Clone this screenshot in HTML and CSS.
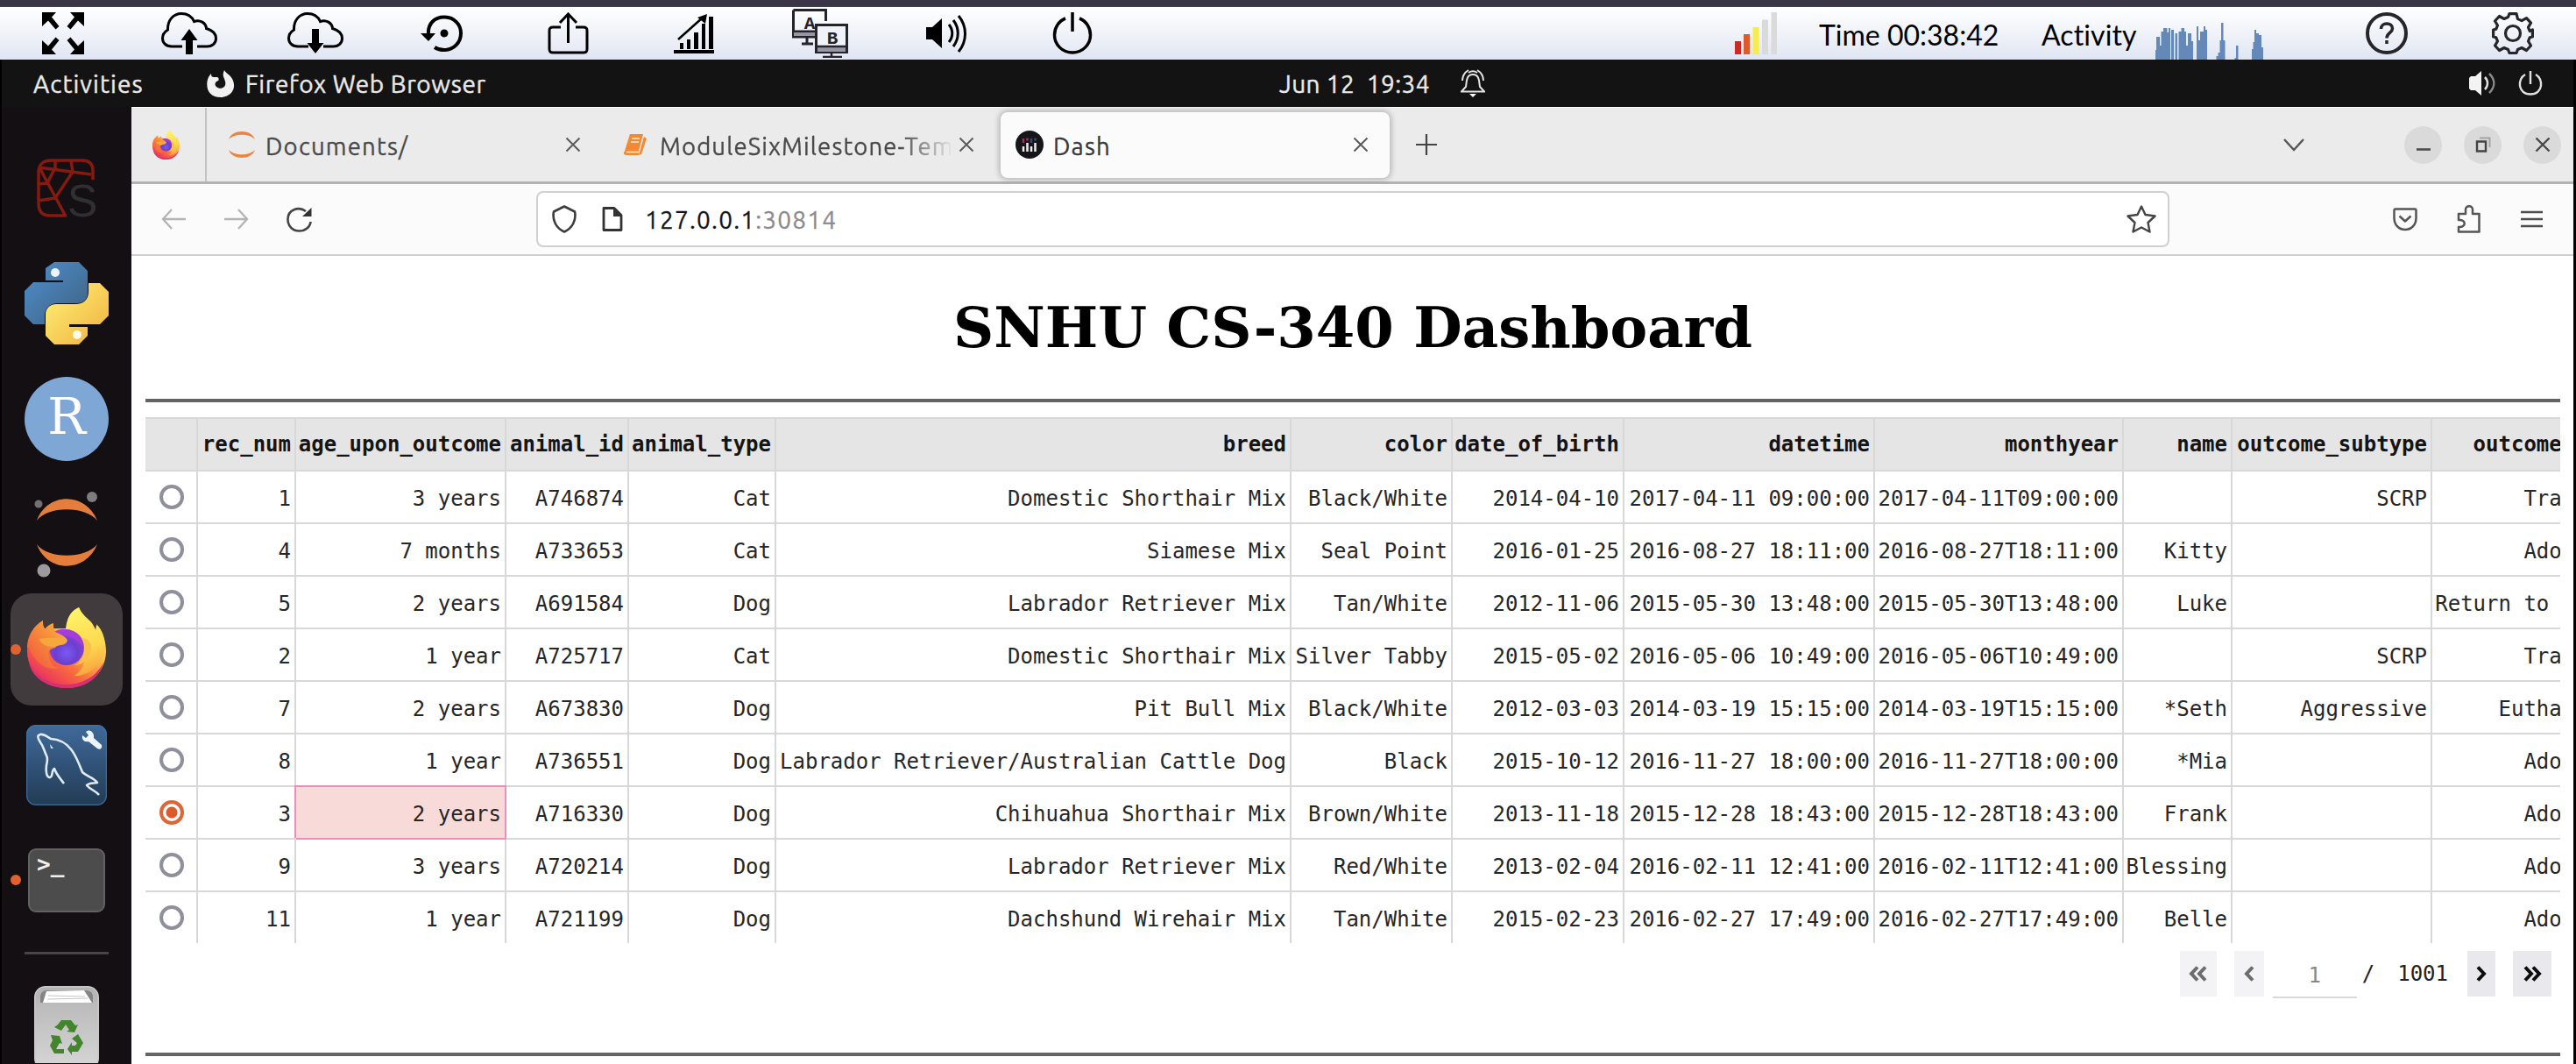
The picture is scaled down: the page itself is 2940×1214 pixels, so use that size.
FILE: index.html
```html
<!DOCTYPE html>
<html lang="en">
<head>
<meta charset="utf-8">
<title>Dash</title>
<link rel="stylesheet" href="styles.css">
</head>
<body>
<svg class="defs" width="0" height="0" aria-hidden="true">
  <defs>
    <linearGradient id="ffBody" x1="0.85" y1="0.1" x2="0.2" y2="0.95">
      <stop offset="0" stop-color="#fff36a"/><stop offset="0.35" stop-color="#ffbd4a"/><stop offset="0.65" stop-color="#f9703d"/><stop offset="0.9" stop-color="#ee3f57"/><stop offset="1" stop-color="#d92a78"/>
    </linearGradient>
    <linearGradient id="ffHead" x1="0" y1="1" x2="1" y2="0">
      <stop offset="0" stop-color="#f2503f"/><stop offset="0.6" stop-color="#f6903a"/><stop offset="1" stop-color="#fcbd45"/>
    </linearGradient>
    <linearGradient id="ffFlame" x1="0.4" y1="0" x2="0.6" y2="1">
      <stop offset="0" stop-color="#fff36a"/><stop offset="0.6" stop-color="#fcd84f"/><stop offset="1" stop-color="#f9a03d"/>
    </linearGradient>
    <radialGradient id="ffGlobe" cx="0.5" cy="0.65" r="0.65">
      <stop offset="0" stop-color="#7a5af0"/><stop offset="0.5" stop-color="#6a3fd0"/><stop offset="1" stop-color="#a83fd8"/>
    </radialGradient>
    <linearGradient id="pyBlue" x1="0" y1="0" x2="1" y2="1"><stop offset="0" stop-color="#5090cc"/><stop offset="1" stop-color="#3d6082"/></linearGradient>
    <linearGradient id="pyGold" x1="0" y1="0" x2="1" y2="1"><stop offset="0.1" stop-color="#fdec74"/><stop offset="1" stop-color="#f0b03c"/></linearGradient>
    <linearGradient id="sqlBg" x1="0" y1="0" x2="0" y2="1"><stop offset="0" stop-color="#406a9b"/><stop offset="1" stop-color="#223b53"/></linearGradient>
    <linearGradient id="binBg" x1="0" y1="0" x2="0" y2="1"><stop offset="0" stop-color="#b4b4b4"/><stop offset="1" stop-color="#d6d6d6"/></linearGradient>
    <symbol id="firefox" viewBox="0 0 90 92">
      <path d="M79 20c8 9 11 20 11 30 0 24-20 42-45 42S0 74 0 50c0-14 6-27 18-35 0 4 0 6 2 9h27C43 14 50 4 59 0c4 9 10 12 15 18 2 3 3 6 4 9z" fill="url(#ffBody)"/>
      <path d="M44 32C43 14 50 4 59 0c3 11 14 14 20 27 2-2 1-5 0-8 9 9 11 21 9 32-4 18-22 28-34 27 12-8 15-22 8-35-4-7-10-10-18-11z" fill="url(#ffFlame)"/>
      <circle cx="45" cy="46" r="20" fill="url(#ffGlobe)"/>
      <path d="M28 30c9-8 26-7 34 5l-5-1c4 2 6 6 6 10-8-10-21-14-35-14z" fill="#a43ddb"/>
      <path d="M62 35c7 8 3 27-8 31 12 0 21-12 19-23-2-6-7-8-11-8z" fill="#fbc04a"/>
      <path d="M0 46c0-13 7-25 18-31-1 4 0 7 2 10 3-4 6-6 10-7 0 5 0 9 4 11 5 2 11 5 12 9-3 6-10 3-14 8-3 1-6 1-8 6 3 18 10 16 12 17-16 4-28-8-34-23z" fill="url(#ffHead)"/>
      <path d="M13 36c10-1 22-3 33 2-3 7-11 4-15 7-5 0-12 0-18-9z" fill="#f7a83c"/>
      <path d="M2 64c9 18 27 24 42 24 19 0 35-9 43-25-5 19-22 29-42 29S7 82 2 64z" fill="#d82f71"/>
    </symbol>
    <symbol id="close" viewBox="0 0 18 18"><path d="M1.500 1.500l15 15M16.500 1.500l-15 15" fill="none" stroke="#5b5b5b" stroke-width="2"/></symbol>
    <symbol id="cloud" viewBox="0 0 64 48"><path d="M24 39H12C5 39 1.500 34.500 1.500 29.500c0-4.500 3-7.500 6-9.500C7 9 14 1.500 23 1.500c7 0 12 3.500 14.500 9C44 8 51 12 51.500 18.500c7 2 11 6 11 11.500 0 6-5 9-10 9H41" fill="none" stroke="#000" stroke-width="3"/></symbol>
  </defs>
</svg>

<div class="frame-edge"></div>

<header class="toolbar">
  <nav class="tools">
    <span class="slot"><svg width="48" height="48" viewBox="0 0 48 48"><path d="M0 0h16l-5 5.500 8.500 10.500-4 3.500L7 9.500 0 16zM48 0H32l5 5.500L28.500 16l4 3.500L41 9.500l7 6.500zM0 48h16l-5-5.500L19.500 32l-4-3.500L7 38.500 0 32zM48 48H32l5-5.500L28.500 32l4-3.500 8.500 10 7-6.500z"/></svg></span>
    <span class="slot"><svg width="64" height="48"><use href="#cloud"/><path d="M32 19l9.500 13H36v16h-8V32h-5.500z"/></svg></span>
    <span class="slot"><svg width="64" height="48"><use href="#cloud"/><path d="M32 47l-9.500-12H28V19h8v16h5.500z"/></svg></span>
    <span class="slot"><svg width="48" height="48" viewBox="0 0 48 48"><path d="M9 25C8 13 16 5.500 27 5.500c11 0 19 8 19 18.500s-8 19-19 19c-4 0-8-1-11-3" fill="none" stroke="#000" stroke-width="4"/><path d="M0 24h17l-8 9z"/><circle cx="27" cy="24" r="4.500"/></svg></span>
    <span class="slot"><svg width="48" height="48" viewBox="0 0 48 48" fill="none" stroke="#000" stroke-width="3"><path d="M16 17H7c-3 0-4 1-4 4v21c0 3 1 4 4 4h35c3 0 4-1 4-4V21c0-3-1-4-4-4h-9M24.500 35V2M15 12l9.500-10L34 12"/></svg></span>
    <span class="slot"><svg width="48" height="48" viewBox="0 0 48 48"><path d="M1 43h46v4H1zM8 35h4v7H8zM16 31h4v11h-4zM24 23h5v19h-5zM33 13h4v29h-4zM41 5h5v37h-5z"/><path d="M6 31L34 6" stroke="#000" stroke-width="2.500"/><path d="M28 6l11-4-2 11z"/></svg></span>
    <span class="slot"><svg width="64" height="56" viewBox="0 0 64 56"><path d="M1.500 1.500h37V14M1.500 1.500V32H26M1 26h25M17 32v8M11 40h13" fill="none" stroke="#24242a" stroke-width="3"/><rect x="2" y="27" width="24" height="4" fill="#9696a4"/><rect x="27.500" y="18.500" width="35" height="31" fill="#f1f3fa" stroke="#24242a" stroke-width="3"/><rect x="29" y="44" width="32" height="5" fill="#9696a4"/><path d="M28 43h34M45 50v5M35 55h22" stroke="#24242a" stroke-width="2.500"/><text x="20" y="23" class="glyph">A</text><text x="46" y="40" class="glyph">B</text></svg></span>
    <span class="slot"><svg width="48" height="48" viewBox="0 0 48 48"><path d="M1 17h7l11-10v34L8 31H1z"/><path d="M27 14c5 6 5 14 0 20M32 9c7 9 7 21 0 30M38 4c10 12 10 29 0 41" fill="none" stroke="#000" stroke-width="3"/></svg></span>
    <span class="slot"><svg width="48" height="48" viewBox="0 0 48 48" fill="none" stroke="#000" stroke-width="3.500"><path d="M24 0v22M16 7C8 10 3.500 18 3.500 26c0 11 9 20 20.500 20s20.500-9 20.500-20C44.500 18 40 10 32 7"/></svg></span>
  </nav>
  <div class="session">
    <svg class="signal" width="48" height="48"><path fill="#cb2a25" d="M0 33h7v15H0z"/><path fill="#dc5a2c" d="M10 25h7v23h-7z"/><path fill="#f8ec4a" d="M20.500 17h7v31h-7z"/><path fill="#dadada" d="M31 8.500h7V48h-7zM41.500 0h7v48h-7z"/></svg>
    <span class="time">Time 00:38:42</span>
    <span class="activity">Activity</span>
    <svg class="spark" width="124" height="42" viewBox="0 0 124 42" fill="#6488b8"><path d="M0 42V31h1V16h4v10h1.500V10H9V6h4.500v5h1.500V6h2v36zM18 42V8h3v34zM22.500 42V12h2.500v30zM26.500 42V10h3V6H33v4h2v16h2V12h4v9h2v21zM47 42V4h2v16h2V10h4V4h2v4h2v34zM69.500 42v-4h2v-4h2V20h1.500V0h2.500v20h2v22zM90.500 42v-2H92V26h2.500v16zM110 42V30h1.500V22h1.500V8h2v4h3v2h3v14h2v14z"/></svg>
  </div>
  <div class="tools">
    <span class="slot"><svg width="48" height="48" viewBox="0 0 48 48" fill="none" stroke="#26262a"><circle cx="24" cy="24" r="22" stroke-width="4"/><path d="M17.500 19c0-4 3-6 6.500-6s6.500 2 6.500 5.500c0 5-6.500 5-6.500 11" stroke-width="3.500"/><path d="M24 32v4" stroke-width="3.500"/></svg></span>
    <span class="slot"><svg width="48" height="48" viewBox="0 0 48 48" fill="none" stroke="#26262a" stroke-width="3.200" stroke-linejoin="round"><path d="M20 1.600h8l1.500 6 4.500 2 5.500-3 5 5.500-3 5 1.700 4.400L46.400 20v8l-3.200.8-1.700 4.200 3 5-5 5.500-5.500-3-4.500 2-1.500 4h-8l-1.500-4-4.500-2-5.500 3-5-5.500 3-5L4.800 28.800 1.600 28v-8l3.200-.8 1.700-4.200-3-5 5-5.500 5.500 3 4.500-2z"/><circle cx="24" cy="24" r="8.500"/></svg></span>
  </div>
</header>

<section class="desktop">
  <div class="gnome-bar">
    <span class="g-activities">Activities</span>
    <svg class="g-ff" width="31" height="31" viewBox="0 0 31 31"><path d="M20 0c2 4 8 6 10 12 4 11-4 19-14.500 19S-1 24 .500 13C1 9 3 6 5 4c0 3 1 4 3 4h4c2 1 2 3 1 4-3 1-5 4-2 7 4 4 12 1 10-6-1-5-4-6-1-13z" fill="#f1f1f1"/></svg>
    <span class="g-app">Firefox Web Browser</span>
    <span class="g-clock">Jun 12&nbsp; 19:34</span>
    <svg class="g-bell" width="28" height="32" viewBox="0 0 28 32" fill="none" stroke="#e4e4e4" stroke-width="2"><path d="M1 25.500h26L22 20c-1-5 0-14-8-14s-7 9-8 14zM2 13C2 8 4 4 9 1M26 13c0-5-2-9-7-12M9 4c3-2 7-2 10 0"/><path d="M10 28h8l-4 4z" fill="#fff" stroke="none"/></svg>
    <span class="g-status">
      <svg width="30" height="28" viewBox="0 0 30 28"><path d="M0 8l2-2h5l7-6v28l-7-6H2l-2-2z" fill="#f3f3f3"/><path d="M18 7c4 4 4 10 0 14" fill="none" stroke="#e0e0e0" stroke-width="2.500"/><path d="M23 3c7 7 7 15 0 22" fill="none" stroke="#8a8a8a" stroke-width="2.500"/></svg>
      <svg width="28" height="28" viewBox="0 0 28 28" fill="none" stroke="#e0e0e0" stroke-width="2.400"><path d="M14 0v15M8 4C-1 9-1 26 14 26.500 29 26 29 9 20 4"/></svg>
    </span>
  </div>

  <div class="workspace">
    <aside class="dock">
      <svg class="d-spyder" width="68" height="68" viewBox="0 0 68 68" fill="none"><path d="M64 24V14C64 6 60 2 52 2H16C7 2 2 7 2 16v35c0 9 4 14 13 14h19M2 10l60 8M4 12l28 52M21 2v8L12 28l-10 1M39 2l2 13L21 45 2 48" stroke="#851a10" stroke-width="3.500"/><text x="52" y="66" class="spy-s">S</text></svg>
      <svg class="d-python" width="96" height="96" viewBox="0 0 96 96"><path d="M34 1h28l10 10v25c0 8-5 12-12 12H38c-9 0-15 6-15 14v10H10L0 62V34l10-10h34v-2H24V8z" fill="url(#pyBlue)"/><path d="M62 95H34L24 85V61c0-8 6-12 12-12h22c10 0 15-6 15-14V25h13l10 10v27L86 72H51v3h21v10z" fill="url(#pyGold)"/><circle cx="35" cy="13" r="5" fill="#eef4ff"/><circle cx="60" cy="84" r="5" fill="#fffbe8"/></svg>
      <div class="d-r">R</div>
      <svg class="d-jupyter" width="76" height="98" viewBox="0 0 76 98"><path d="M4 33C16 0 60 0 73 33 60 16 16 16 4 33zM4 60c12 17 56 17 69 0C60 93 16 93 4 60z" fill="#e57e3c"/><circle cx="6" cy="14" r="4.500" fill="#717171"/><circle cx="67" cy="6" r="6" fill="#7d7d7d"/><circle cx="12" cy="90" r="7.500" fill="#9b9b9b"/></svg>
      <div class="d-firefox running"><svg width="90" height="92"><use href="#firefox"/></svg></div>
      <svg class="d-mysql" width="92" height="92" viewBox="0 0 92 92"><rect width="92" height="92" rx="11" fill="url(#sqlBg)"/><rect x=".7" y=".7" width="90.600" height="90.600" rx="10.500" fill="none" stroke="#3f74ae" stroke-width="1.400" opacity=".7"/><path d="M43 67c-6-8-9-11-11-17-4 3-1 9-5 10-4 0-5-7-4-14 1-4 2-7 0-11-3-6-3-10-7-15-3-5-4-8 0-9 4-1 8 3 12 5 22 1 29 20 36 38 5 5 13 6 17 12-5 1-9 0-12 3 4 5 10 6 14 11" fill="none" stroke="#dfeaf4" stroke-width="2.600" stroke-linejoin="round"/><path d="M27 22l4 5-3 0z" fill="#dfeaf4"/><path d="M68 8c4-4 10 0 9 7l9 8c1 4-2 6-5 4l-10-8c-5 1-8-2-7-7l4 3 3-3z" fill="#edf4fa"/></svg>
      <div class="d-term running"><span>&gt;_</span></div>
      <div class="d-sep"></div>
      <svg class="d-trash" width="74" height="88" viewBox="0 0 74 88"><rect x=".8" y=".8" width="72.400" height="94" rx="12" fill="url(#binBg)" stroke="#c9c9c9" stroke-width="1.600"/><path d="M7 19V12c0-4 3-7 7-7h45c5 0 8 3 8 7v7z" fill="#858585"/><path d="M10 19l4-13 43-1 9 14z" fill="#fff"/><path d="M16 11l42 1M15 15l46-1" stroke="#c6c6c6"/><g fill="#42852c"><path d="M27 44l4-5h11l5 6 3-1-4 9-9-1 3-2-4-6-5 7-8-4zM19 56l10 1 3 9-3-1-4 7h9v5H23l-5-9 3-6zM43 60l7-5 6 10-6 10h-7v4l-5-7 5-8v4h4l2-3z"/></g></svg>
    </aside>

    <main class="browser">
      <div class="tab-strip">
        <div class="pinned"><svg width="31" height="33" viewBox="0 0 90 92" preserveAspectRatio="none"><use href="#firefox" width="90" height="92"/></svg></div>
        <div class="tab t-doc">
          <svg width="32" height="32" viewBox="0 0 32 32"><path d="M1 10C5-2 27-2 31 10 24 3 8 3 1 10zM1 22c4 12 26 12 30 0-7 7-23 7-30 0z" fill="#ea8441"/></svg>
          <span class="label">Documents/</span><svg class="x" width="18" height="18"><use href="#close"/></svg>
        </div>
        <div class="tab t-mod">
          <svg width="28" height="26" viewBox="0 0 28 26"><path d="M8 1h15l-5 19H2zM3 20h15v5H4c-4 0-4-4-1-5zM24 4l3 2-6 18-3 1z" fill="#f08a35"/><path d="M10 6h9M9 10h9M4 21.500h14" stroke="#fff0dd" stroke-width="1.600"/></svg>
          <span class="label fade">ModuleSixMilestone-Tem</span><svg class="x" width="18" height="18"><use href="#close"/></svg>
        </div>
        <div class="tab t-dash">
          <svg width="32" height="32" viewBox="0 0 32 32"><circle cx="16" cy="16" r="16" fill="#15151a"/><path d="M9 18v6M13.500 14v10M18 18v6M22.500 14v10" stroke="#eee" stroke-width="2.500"/><path d="M9 9v5M13.500 8.500v3" stroke="#a13358" stroke-width="2.500"/><path d="M18 9v5M22.500 8.500v3" stroke="#3a4a68" stroke-width="2.500"/></svg>
          <span class="label">Dash</span><svg class="x" width="18" height="18"><use href="#close"/></svg>
        </div>
        <svg class="plus" width="24" height="24"><path d="M0 12h24M12 0v24" stroke="#444" stroke-width="2.200"/></svg>
        <svg class="chev" width="24" height="15" fill="none"><path d="M1 1l11 12L23 1" stroke="#555" stroke-width="2.400"/></svg>
        <span class="win"><svg width="16" height="18"><path d="M0 14.500h16" stroke="#4c4c4c" stroke-width="2.600"/></svg></span>
        <span class="win"><svg width="18" height="18" fill="none"><path d="M2 5.500h10v11H2z" stroke="#444" stroke-width="2.400"/><path d="M5 1.500h11.500V12" stroke="#a4a4a4" stroke-width="2"/></svg></span>
        <span class="win"><svg width="18" height="18"><path d="M1.500 1.500l15 15M16.500 1.500l-15 15" stroke="#484848" stroke-width="2.400"/></svg></span>
      </div>

      <div class="nav-bar">
        <svg class="n-back" width="28" height="24" fill="none" stroke="#b4b4b4" stroke-width="2.300"><path d="M28 12H2M12 1L2 12l10 11"/></svg>
        <svg class="n-fwd" width="28" height="24" fill="none" stroke="#b4b4b4" stroke-width="2.300"><path d="M0 12h26M16 1l10 11-10 11"/></svg>
        <svg class="n-reload" width="30" height="29" viewBox="0 0 30 29"><path d="M22 5C14-1 1 3 1.500 15c.5 8 6 12.500 13 12.500S27 23 27.500 17" fill="none" stroke="#444" stroke-width="2.600"/><path d="M28.500 1v10H18z" fill="#333"/></svg>
        <div class="url-box">
          <svg class="u-shield" width="30" height="32" fill="none" stroke="#3c3c3c" stroke-width="2.600" stroke-linejoin="round"><path d="M15 1.500l12 6c2 10-3 19-12 23C6 26.500 1 17.500 3 7.500z"/></svg>
          <svg class="u-doc" width="24" height="28"><path d="M2 1.500h12l8 8v17H2z" fill="none" stroke="#333" stroke-width="2.800" stroke-linejoin="round"/><path d="M13 1l9 10h-9z" fill="#333"/></svg>
          <span class="u-text"><b>127.0.0.1</b><i>:30814</i></span>
          <svg class="u-star" width="34" height="32" viewBox="0 0 34 32" fill="none" stroke="#444" stroke-width="2.400" stroke-linejoin="round"><path d="M17 1.500l4.500 9.500 11 1.500-8 7.500 2 10.500L17 25.500 7.500 30.500l2-10.500-8-7.500 11-1.500z"/></svg>
        </div>
        <svg class="n-pocket" width="28" height="27" fill="none" stroke="#555" stroke-width="2.500" stroke-linejoin="round"><path d="M3 1.500h22c1.500 0 1.500 1 1.500 2V12c0 8-6 13-12.500 13S1.500 20 1.500 12V3.500c0-1 0-2 1.500-2zM7.500 9.500l6.500 6 6.500-6"/></svg>
        <svg class="n-ext" width="28" height="32" fill="none" stroke="#555" stroke-width="2.500" stroke-linejoin="round"><path d="M2 12V10h8V5c0-5 8-5 8 0v5h7.500v20.500H2V25c9 1 9-9 0-8z"/></svg>
        <svg class="n-menu" width="25" height="20" stroke="#4d4d4d" stroke-width="2.600"><path d="M0 2h25M0 10h25M0 18h25"/></svg>
      </div>

      <div class="page">
        <h1>SNHU CS-340 Dashboard</h1>
        <hr>
        <div class="table-wrap">
          <table>
            <colgroup><col class="c0"><col class="c1"><col class="c2"><col class="c3"><col class="c4"><col class="c5"><col class="c6"><col class="c7"><col class="c8"><col class="c9"><col class="c10"><col class="c11"><col class="c12"></colgroup>
            <thead><tr><th></th><th>rec_num</th><th>age_upon_outcome</th><th>animal_id</th><th>animal_type</th><th>breed</th><th>color</th><th>date_of_birth</th><th>datetime</th><th>monthyear</th><th>name</th><th>outcome_subtype</th><th>outcome_type</th></tr></thead>
            <tbody>
              <tr><td><span class="radio"></span></td><td>1</td><td>3 years</td><td>A746874</td><td>Cat</td><td>Domestic Shorthair Mix</td><td>Black/White</td><td>2014-04-10</td><td>2017-04-11 09:00:00</td><td>2017-04-11T09:00:00</td><td></td><td>SCRP</td><td>Transfer</td></tr>
              <tr><td><span class="radio"></span></td><td>4</td><td>7 months</td><td>A733653</td><td>Cat</td><td>Siamese Mix</td><td>Seal Point</td><td>2016-01-25</td><td>2016-08-27 18:11:00</td><td>2016-08-27T18:11:00</td><td>Kitty</td><td></td><td>Adoption</td></tr>
              <tr><td><span class="radio"></span></td><td>5</td><td>2 years</td><td>A691584</td><td>Dog</td><td>Labrador Retriever Mix</td><td>Tan/White</td><td>2012-11-06</td><td>2015-05-30 13:48:00</td><td>2015-05-30T13:48:00</td><td>Luke</td><td></td><td>Return to Owner</td></tr>
              <tr><td><span class="radio"></span></td><td>2</td><td>1 year</td><td>A725717</td><td>Cat</td><td>Domestic Shorthair Mix</td><td>Silver Tabby</td><td>2015-05-02</td><td>2016-05-06 10:49:00</td><td>2016-05-06T10:49:00</td><td></td><td>SCRP</td><td>Transfer</td></tr>
              <tr><td><span class="radio"></span></td><td>7</td><td>2 years</td><td>A673830</td><td>Dog</td><td>Pit Bull Mix</td><td>Black/White</td><td>2012-03-03</td><td>2014-03-19 15:15:00</td><td>2014-03-19T15:15:00</td><td>*Seth</td><td>Aggressive</td><td>Euthanasia</td></tr>
              <tr><td><span class="radio"></span></td><td>8</td><td>1 year</td><td>A736551</td><td>Dog</td><td>Labrador Retriever/Australian Cattle Dog</td><td>Black</td><td>2015-10-12</td><td>2016-11-27 18:00:00</td><td>2016-11-27T18:00:00</td><td>*Mia</td><td></td><td>Adoption</td></tr>
              <tr><td><span class="radio on"></span></td><td>3</td><td class="active">2 years</td><td>A716330</td><td>Dog</td><td>Chihuahua Shorthair Mix</td><td>Brown/White</td><td>2013-11-18</td><td>2015-12-28 18:43:00</td><td>2015-12-28T18:43:00</td><td>Frank</td><td></td><td>Adoption</td></tr>
              <tr><td><span class="radio"></span></td><td>9</td><td>3 years</td><td>A720214</td><td>Dog</td><td>Labrador Retriever Mix</td><td>Red/White</td><td>2013-02-04</td><td>2016-02-11 12:41:00</td><td>2016-02-11T12:41:00</td><td>Blessing</td><td></td><td>Adoption</td></tr>
              <tr><td><span class="radio"></span></td><td>11</td><td>1 year</td><td>A721199</td><td>Dog</td><td>Dachshund Wirehair Mix</td><td>Tan/White</td><td>2015-02-23</td><td>2016-02-27 17:49:00</td><td>2016-02-27T17:49:00</td><td>Belle</td><td></td><td>Adoption</td></tr>
            </tbody>
          </table>
        </div>
        <div class="pager">
          <span class="pbtn off first"><svg width="21" height="18" fill="none"><path d="M10 1.500L3 9l7 7.500M19 1.500L12 9l7 7.500"/></svg></span>
          <span class="pbtn off prev"><svg width="12" height="18" fill="none"><path d="M10 1.500L3 9l7 7.500"/></svg></span>
          <span class="pnum">1</span><span class="pslash">/</span><span class="ptotal">1001</span>
          <span class="pbtn next"><svg width="12" height="18" fill="none"><path d="M2 1.500L9 9l-7 7.500"/></svg></span>
          <span class="pbtn last"><svg width="21" height="18" fill="none"><path d="M2 1.500L9 9l-7 7.500M11 1.500L18 9l-7 7.500"/></svg></span>
        </div>
        <hr>
      </div>
    </main>
  </div>
</section>
</body>
</html>
```
FILE: styles.css
```css
* { box-sizing: border-box; }
html, body { margin: 0; height: 1214px; overflow: hidden; }
body { width: 2940px; background: #000; display: flex; flex-direction: column; font-family: Ubuntu, "Noto Sans", sans-serif; }
svg { display: block; flex: none; }
.defs { position: absolute; }

.frame-edge { height: 8px; flex: none; background: linear-gradient(#3b3548 0 75%, #464049); }

/* Remote session toolbar */
.toolbar { height: 60px; flex: none; display: flex; align-items: center; background: linear-gradient(#ffffff, #e0e6f2); }
.tools { display: flex; height: 60px; }
.slot { width: 144px; height: 60px; display: flex; justify-content: center; align-items: center; overflow: hidden; }
.glyph { font: bold 21px "Liberation Mono", monospace; text-anchor: middle; fill: #24242a; }
.session { flex: 1; display: flex; height: 60px; padding-left: 684px; font: 32px Lato, sans-serif; color: #000; align-items: center; white-space: nowrap; }
.signal { margin-right: 48px; }
.time { width: 254px; padding-top: 3px; }
.activity { width: 130px; padding-top: 3px; letter-spacing: .1px; }
.spark { align-self: flex-end; }

/* Desktop top bar */
.desktop { flex: 1; display: flex; flex-direction: column; padding: 0 3px 0 2px; min-height: 0; }
.gnome-bar { height: 54px; flex: none; display: flex; align-items: center; background: #131313; color: #e9e9e9; font-size: 28px; white-space: pre; -webkit-text-stroke: .4px #e9e9e9; }
.g-activities { width: 198px; padding-left: 36px; letter-spacing: 1.1px; }
.g-ff { margin-left: 36px; }
.g-app { margin-left: 13px; width: 1180px; letter-spacing: .6px; }
.g-clock { width: 207px; letter-spacing: .4px; }
.g-bell { margin-right: auto; }
.g-status { display: flex; gap: 26px; padding-right: 35px; }

.workspace { flex: 1; display: flex; min-height: 0; }
.dock { width: 148px; flex: none; background: #140f12; display: flex; flex-direction: column; align-items: center; padding: 59px 0 0 0; overflow: hidden; }
.spy-s { font: 52px "Liberation Sans", sans-serif; text-anchor: middle; fill: #303030; }
.d-python { margin-top: 49px; }
.d-r { width: 96px; height: 96px; margin-top: 36px; border-radius: 50%; background: #7fa7d6; color: #fff; font: 58px/91px "DejaVu Serif", serif; text-align: center; flex: none; }
.d-jupyter { margin-top: 35px; }
.d-firefox { width: 128px; height: 128px; margin-top: 18px; flex: none; border-radius: 24px; background: #413b3e; display: flex; justify-content: center; align-items: center; padding-bottom: 4px; }
.running { position: relative; }
.running::before { content: ""; position: absolute; width: 12px; height: 12px; border-radius: 50%; background: #e2622f; left: 0; top: 58px; }
.d-mysql { margin-top: 22px; }
.d-term { width: 88px; height: 73px; flex: none; margin-top: 49px; border-radius: 9px; background: #4c4c4c; border: 2px solid #626262; color: #eee; font: bold 26px/30px "DejaVu Sans Mono", monospace; padding: 1px 0 0 8px; }
.d-term::before { left: -22px; top: 28px; }
.d-sep { width: 96px; height: 3px; margin-top: 45px; background: #494448; flex: none; }
.d-trash { margin-top: 36px; }

/* Browser chrome */
.browser { flex: 1; min-width: 0; background: #fff; display: flex; flex-direction: column; }
.tab-strip { height: 88px; flex: none; background: #ebebeb; border-top: 1px solid #fafafa; border-bottom: 3px solid #b4b4b4; display: flex; align-items: center; color: #4a4a4a; font-size: 27.5px; white-space: nowrap; -webkit-text-stroke: .3px; }
.pinned { width: 86px; height: 100%; border-right: 2px solid #c3c3c3; display: flex; align-items: center; padding-left: 24px; }
.tab { height: 75px; display: flex; align-items: center; flex: none; }
.label { flex: 1; padding-left: 11px; letter-spacing: 1.2px; padding-top: 2px; }
.t-doc { width: 427px; padding-left: 24px; }
.t-mod { width: 450px; padding-left: 48px; }
.fade { flex: none; width: 346px; padding-left: 14px; letter-spacing: 1.1px; overflow: hidden; -webkit-mask-image: linear-gradient(90deg, #000 83%, transparent 101%); mask-image: linear-gradient(90deg, #000 83%, transparent 101%); }
.t-mod .x { margin-left: 9px; }
.t-dash { width: 444px; margin-left: 29px; padding: 0 24px 0 17px; background: #fbfbfb; border-radius: 8px; box-shadow: 0 0 6px 2px rgba(0,0,0,.23); color: #37373c; }
.plus { margin-left: 30px; }
.chev { margin-left: auto; margin-right: 114px; }
.win { width: 43px; height: 43px; border-radius: 50%; background: #dadada; display: flex; align-items: center; justify-content: center; margin-right: 25px; }
.win:last-child { margin-right: 14px; }
.nav-bar { height: 82px; flex: none; background: #fbfbfb; border-bottom: 2px solid #d0d0d0; display: flex; align-items: center; }
.n-back { margin-left: 34px; }
.n-fwd { margin-left: 44px; }
.n-reload { margin-left: 43px; }
.url-box { width: 1864px; height: 64px; margin-left: 255px; margin-top: -1px; background: #fff; border: 2px solid #d0d0d0; border-radius: 8px; display: flex; align-items: center; }
.u-shield { margin-left: 15px; }
.u-doc { margin-left: 28px; }
.u-text { flex: 1; margin-left: 25px; padding-top: 2px; font-size: 28px; letter-spacing: 1.2px; -webkit-text-stroke: .3px; }
.u-text b { font-weight: 400; color: #15151a; }
.u-text i { font-style: normal; color: #8a8a90; }
.u-star { margin-right: 13px; }
.n-pocket { margin-left: 255px; }
.n-ext { margin-left: 45px; }
.n-menu { margin-left: 45px; }

/* Dashboard */
.page { flex: 1; padding: 0 15px 0 16px; overflow: hidden; }
h1 { margin: 39px 0 0; height: 124px; padding-top: 8px; text-align: center; font: bold 64px/70px "DejaVu Serif", serif; color: #000; white-space: nowrap; }
hr { margin: 0; height: 4px; border: 0; background: #646464; }
.table-wrap { margin-top: 17px; height: 600px; overflow: hidden; }
table { width: 2836px; table-layout: fixed; border-collapse: separate; border-spacing: 0; font: 24px/28px "DejaVu Sans Mono", monospace; color: #262626; }
.c0 { width: 60px; } .c1 { width: 112px; } .c2 { width: 240px; } .c3 { width: 140px; }
.c4 { width: 168px; } .c5 { width: 588px; } .c6 { width: 184px; } .c7 { width: 196px; }
.c8 { width: 286px; } .c9 { width: 284px; } .c10 { width: 124px; } .c11 { width: 228px; } .c12 { width: 226px; }
th, td { height: 60px; padding: 3px 4px 0 0; border: 0 solid #d8d8d8; border-top-width: 2px; border-right-width: 2px; text-align: right; vertical-align: middle; white-space: nowrap; }
th { background: #e5e5e5; padding: 0 4px 1px 0; color: #141414; }
td:first-child { padding: 0; }
.radio { display: block; width: 28px; height: 28px; margin: 0 0 0 16px; border: 4px solid #8f8f9d; border-radius: 50%; background: #fff; }
.radio.on { border-color: #dd6639; background: radial-gradient(circle, #dd5b2a 0 6px, #fff 7px); }
td.active { background: #f8dbd8; border-color: #f08bbb; box-shadow: -2px 0 0 #f08bbb, 0 2px 0 #f08bbb; position: relative; }
.pager { height: 125px; padding: 9px 10px 0 0; display: flex; justify-content: flex-end; align-items: flex-start; font: 24px/52px "DejaVu Sans Mono", monospace; color: #222; }
.pbtn { height: 52px; display: flex; align-items: center; justify-content: center; background: #e9e8ec; }
.pbtn svg { stroke: #0d0d0d; stroke-width: 4; margin-top: -1px; }
.off { background: #f3f3f5; }
.pbtn.off svg { stroke: #6c6c6c; }
.first { width: 42px; }
.prev { width: 34px; margin-left: 20px; }
.pnum { width: 96px; height: 54px; margin-left: 10px; line-height: 57px; border-bottom: 2px solid #d8d8d8; text-align: center; color: #888; }
.pslash { margin-left: 6px; }
.ptotal { margin-left: 26px; }
.next { width: 32px; margin-left: 22px; }
.last { width: 44px; margin-left: 20px; }
```
